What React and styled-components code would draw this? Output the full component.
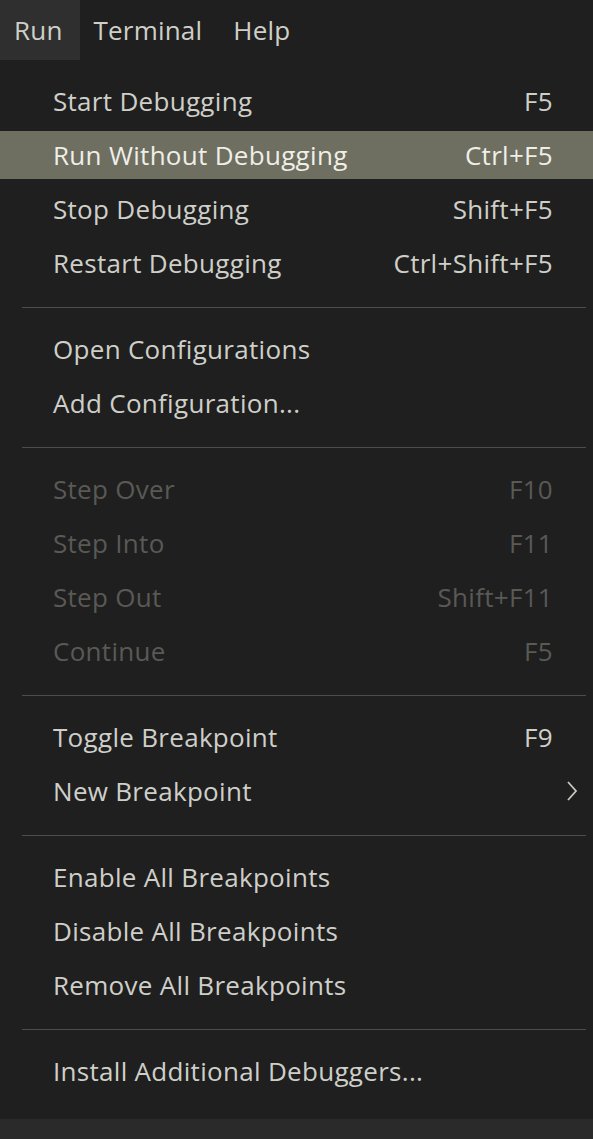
import React from 'react'
import styled, { createGlobalStyle } from 'styled-components'

const GlobalStyle = createGlobalStyle`
  *, *::before, *::after {
    box-sizing: border-box;
  }
  html, body {
    margin: 0;
    padding: 0;
    background: #2a2a2a;
  }
  body {
    font-family: 'Open Sans', 'Noto Sans', sans-serif;
  }
`

const MENU_GROUPS = [
  [
    { label: 'Start Debugging', keys: 'F5' },
    { label: 'Run Without Debugging', keys: 'Ctrl+F5', active: true },
    { label: 'Stop Debugging', keys: 'Shift+F5' },
    { label: 'Restart Debugging', keys: 'Ctrl+Shift+F5' },
  ],
  [{ label: 'Open Configurations' }, { label: 'Add Configuration...' }],
  [
    { label: 'Step Over', keys: 'F10', disabled: true },
    { label: 'Step Into', keys: 'F11', disabled: true },
    { label: 'Step Out', keys: 'Shift+F11', disabled: true },
    { label: 'Continue', keys: 'F5', disabled: true },
  ],
  [
    { label: 'Toggle Breakpoint', keys: 'F9' },
    { label: 'New Breakpoint', submenu: true },
  ],
  [
    { label: 'Enable All Breakpoints' },
    { label: 'Disable All Breakpoints' },
    { label: 'Remove All Breakpoints' },
  ],
  [{ label: 'Install Additional Debuggers...' }],
]

const Chevron = () => (
  <svg width="14" height="22" viewBox="0 0 14 22" fill="none">
    <path d="M3 2 L11 11 L3 20" stroke="#c8c8c0" strokeWidth="1.8" />
  </svg>
)

const App = () => {
  return (
    <Page>
      <GlobalStyle />
      <MenuBar>
        <BarItem open>Run</BarItem>
        <BarItem>Terminal</BarItem>
        <BarItem>Help</BarItem>
      </MenuBar>
      <Menu>
        {MENU_GROUPS.map((group, i) => (
          <React.Fragment key={i}>
            {i > 0 && <Separator />}
            {group.map((item) => (
              <Row
                key={item.label}
                active={item.active}
                disabled={item.disabled}
              >
                <Label>{item.label}</Label>
                {item.keys && <Keys>{item.keys}</Keys>}
                {item.submenu && (
                  <SubArrow>
                    <Chevron />
                  </SubArrow>
                )}
              </Row>
            ))}
          </React.Fragment>
        ))}
      </Menu>
    </Page>
  )
}

const Page = styled.div`
  width: 593px;
  height: 1139px;
  overflow: hidden;
  background: #2a2a2a;
  display: flex;
  flex-direction: column;
`

const MenuBar = styled.div`
  flex-shrink: 0;
  height: 60px;
  display: flex;
  align-items: stretch;
  background: #1f1f1f;
`

const BarItem = styled.div`
  display: flex;
  align-items: center;
  padding: 0 17px 0 14px;
  font-size: 26px;
  letter-spacing: 0.2px;
  color: #cfcfc9;
  background: ${({ open }) => (open ? '#2f2f2f' : 'transparent')};
`

const Menu = styled.div`
  flex-shrink: 0;
  background: #1f1f1f;
  padding: 14px 0 21px;
  display: flex;
  flex-direction: column;
`

const Row = styled.div`
  position: relative;
  height: 48px;
  margin: 3px 0;
  display: flex;
  align-items: center;
  padding: 0 40px 0 53px;
  font-size: 26px;
  letter-spacing: 0.3px;
  color: ${({ active, disabled }) => {
    if (active) return '#efefe7'
    if (disabled) return '#595956'
    return '#cfcfc9'
  }};
  background: ${({ active }) => (active ? '#6e6e61' : 'transparent')};
`

const Label = styled.span`
  flex: 1;
  white-space: nowrap;
`

const Keys = styled.span`
  white-space: nowrap;
`

const SubArrow = styled.span`
  position: absolute;
  right: 14px;
  top: 13px;
  display: flex;
`

const Separator = styled.div`
  flex-shrink: 0;
  height: 1px;
  margin: 17px 7px 14px 22px;
  background: #4c4c4c;
`

export default App
